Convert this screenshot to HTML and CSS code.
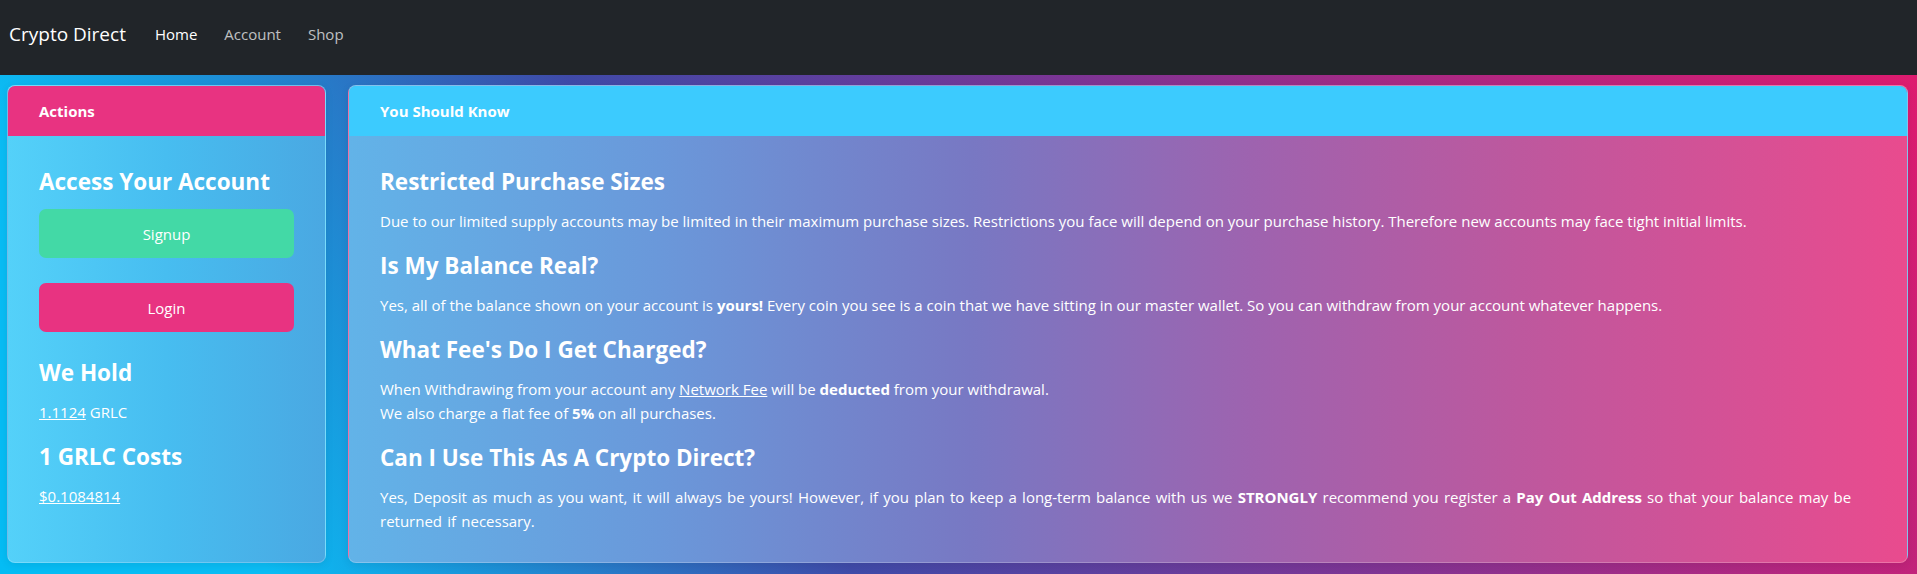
FILE: index.html
```html
<!DOCTYPE html>
<html lang="en">
<head>
<meta charset="utf-8">
<title>Crypto Direct</title>
<link rel="stylesheet" href="styles.css">
</head>
<body>
<nav class="navbar">
  <a class="brand" href="#">Crypto Direct</a>
  <ul class="nav">
    <li><a class="nav-link active" href="#">Home</a></li>
    <li><a class="nav-link" href="#">Account</a></li>
    <li><a class="nav-link" href="#">Shop</a></li>
  </ul>
</nav>
<main class="layout">
  <section class="card card-actions">
    <div class="card-header header-pink">Actions</div>
    <div class="card-body">
      <h4>Access Your Account</h4>
      <a class="btn btn-green" href="#">Signup</a>
      <a class="btn btn-pink" href="#">Login</a>
      <h4>We Hold</h4>
      <p><a href="#">1.1124</a> GRLC</p>
      <h4>1 GRLC Costs</h4>
      <p><a href="#">$0.1084814</a></p>
    </div>
  </section>
  <section class="card card-info">
    <div class="card-header header-cyan">You Should Know</div>
    <div class="card-body">
      <h4>Restricted Purchase Sizes</h4>
      <p>Due to our limited supply accounts may be limited in their maximum purchase sizes. Restrictions you face will depend on your purchase history. Therefore new accounts may face tight initial limits.</p>
      <h4>Is My Balance Real?</h4>
      <p>Yes, all of the balance shown on your account is <b>yours!</b> Every coin you see is a coin that we have sitting in our master wallet. So you can withdraw from your account whatever happens.</p>
      <h4>What Fee's Do I Get Charged?</h4>
      <p>When Withdrawing from your account any <a href="#">Network Fee</a> will be <b>deducted</b> from your withdrawal.<br>We also charge a flat fee of <b>5%</b> on all purchases.</p>
      <h4 class="h-last">Can I Use This As A Crypto Direct?</h4>
      <p class="p-spaced">Yes, Deposit as much as you want, it will always be yours! However, if you plan to keep a long-term balance with us we <b>STRONGLY</b> recommend you register a <b>Pay Out Address</b> so that your balance may be returned if necessary.</p>
    </div>
  </section>
</main>
</body>
</html>
```

FILE: styles.css
```css
* { box-sizing: border-box; }

html, body {
  margin: 0;
  height: 100%;
}

body {
  font-family: "Open Sans", "Noto Sans", "DejaVu Sans", sans-serif;
  font-size: 15px;
  line-height: 24px;
  color: #fff;
  background: linear-gradient(60deg, #05bcf4 0%, #0bbcf4 12%, #1a95da 21%, #3f4aa8 38%, #7b3595 60%, #b5267f 80%, #e21a6d 100%);
  overflow: hidden;
}

.navbar {
  display: flex;
  align-items: center;
  height: 75px;
  padding: 19px 9px 26px;
  background: #212529;
}

.brand {
  font-size: 19px;
  line-height: 30px;
  color: #fff;
  text-decoration: none;
  margin-right: 29px;
}

.nav {
  display: flex;
  gap: 27px;
  list-style: none;
  margin: 0;
  padding: 0;
}

.nav-link {
  font-size: 15px;
  color: rgba(255, 255, 255, 0.72);
  text-decoration: none;
}

.nav-link.active {
  color: #fff;
}

.layout {
  display: grid;
  grid-template-columns: 319px 1fr;
  gap: 22px;
  padding: 10px 9px 0 7px;
  align-items: stretch;
}

.card {
  display: flex;
  flex-direction: column;
  border: 1px solid rgba(255, 255, 255, 0.22);
  border-radius: 8px;
  overflow: hidden;
  box-shadow: 0 2px 8px rgba(0, 0, 0, 0.08);
}

.card-actions {
  background: linear-gradient(to right, #54d1f9 0%, #47bdf0 50%, #4aa8e2 100%);
}

.card-info {
  background: linear-gradient(to right, #62b3e8 0%, #6a98da 20%, #7878c3 40%, #9e63af 58%, #bd589e 75%, #e94b8e 100%);
}

.card-header {
  height: 50px;
  display: flex;
  align-items: center;
  padding: 0 31px;
  font-size: 15px;
  font-weight: 700;
}

.header-pink { background: #e83381; }
.header-cyan { background: #3ccbfe; }

.card-body {
  flex: 1;
  padding: 31px 31px 29px;
}

h4 {
  margin: 0 0 13px;
  font-size: 22.5px;
  line-height: 29px;
  font-weight: 700;
}

h4.h-last {
  margin-top: 2px;
}

p {
  margin: 0 0 18px;
}

.card-body > p:last-child { margin-bottom: 0; }

.p-spaced { word-spacing: 1.3px; }

p a {
  color: #fff;
  text-decoration: underline;
}

b { font-weight: 700; }

.btn {
  display: flex;
  align-items: center;
  justify-content: center;
  height: 49px;
  border-radius: 7px;
  color: #fff;
  text-decoration: none;
  font-size: 15px;
}

.btn-green {
  background: #43d9a6;
  margin-bottom: 25px;
}

.btn-pink {
  background: #e83381;
  margin-bottom: 26px;
}
```
